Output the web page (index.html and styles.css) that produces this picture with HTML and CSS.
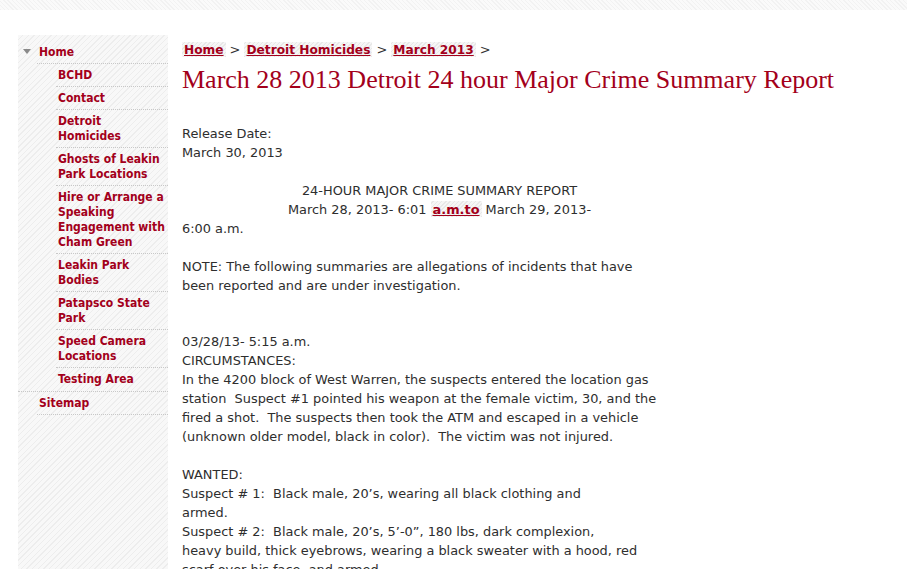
FILE: index.html
```html
<!DOCTYPE html>
<html lang="en">
<head>
<meta charset="utf-8">
<title>March 28 2013 Detroit 24 hour Major Crime Summary Report</title>
<link rel="stylesheet" href="styles.css">
</head>
<body>
<div class="topbar"></div>
<div class="page">
  <nav class="sidebar">
    <ul class="menu">
      <li class="top open">
        <div class="row home"><span class="tri"></span><a href="#">Home</a></div>
        <ul class="sub">
          <li><a href="#">BCHD</a></li>
          <li><a href="#">Contact</a></li>
          <li><a href="#">Detroit<br>Homicides</a></li>
          <li><a href="#">Ghosts of Leakin<br>Park Locations</a></li>
          <li><a href="#">Hire or Arrange a<br>Speaking<br>Engagement with<br>Cham Green</a></li>
          <li><a href="#">Leakin Park<br>Bodies</a></li>
          <li><a href="#">Patapsco State<br>Park</a></li>
          <li><a href="#">Speed Camera<br>Locations</a></li>
          <li class="last"><a href="#">Testing Area</a></li>
        </ul>
      </li>
      <li class="top">
        <div class="row"><a href="#">Sitemap</a></div>
      </li>
    </ul>
  </nav>
  <main class="content">
    <div class="crumbs"><a href="#">Home</a><span class="sep">&gt;</span><a href="#">Detroit Homicides</a><span class="sep">&gt;</span><a href="#">March 2013</a><span class="sep">&gt;</span></div>
    <h1 class="title">March 28 2013 Detroit 24 hour Major Crime Summary Report</h1>
    <div class="body">
      <p class="gap">Release Date:<br>March 30, 2013</p>
      <p class="center">24-HOUR MAJOR CRIME SUMMARY REPORT<br>March 28, 2013- 6:01 <a href="#">a.m.to</a> March 29, 2013-</p>
      <p class="gap">6:00 a.m.</p>
      <p class="gap2">NOTE: The following summaries are allegations of incidents that have<br>been reported and are under investigation.</p>
      <p class="gap">03/28/13- 5:15 a.m.<br>CIRCUMSTANCES:<br>In the 4200 block of West Warren, the suspects entered the location gas<br>station&nbsp; Suspect #1 pointed his weapon at the female victim, 30, and the<br>fired a shot.&nbsp; The suspects then took the ATM and escaped in a vehicle<br>(unknown older model, black in color).&nbsp; The victim was not injured.</p>
      <p class="gap">WANTED:<br>Suspect # 1:&nbsp; Black male, 20’s, wearing all black clothing and<br>armed.<br>Suspect # 2:&nbsp; Black male, 20’s, 5’-0”, 180 lbs, dark complexion,<br>heavy build, thick eyebrows, wearing a black sweater with a hood, red<br>scarf over his face, and armed.</p>
    </div>
  </main>
</div>
</body>
</html>
```
FILE: styles.css
```css
html, body {
  margin: 0;
  padding: 0;
  background: #fff;
}
body {
  font-family: "DejaVu Sans", Verdana, sans-serif;
  color: #2e2e2e;
}
.topbar {
  height: 10px;
  background-color: #fafafa;
  background-image: repeating-linear-gradient(45deg, #f2f2f2 0 1px, transparent 1px 3px);
}
.page {
  display: flex;
  align-items: stretch;
  padding-left: 18px;
  padding-top: 25px;
}
.sidebar {
  width: 150px;
  flex: none;
  padding-top: 6px;
  background-color: #f8f8f8;
  background-image: repeating-linear-gradient(-45deg, #ededed 0 1px, transparent 1px 4px);
}
.menu, .sub {
  list-style: none;
  margin: 0;
  padding: 0;
  font-size: 12px;
}
.menu a {
  font-family: "DejaVu Sans Condensed", "DejaVu Sans", sans-serif;
  font-stretch: condensed;
  color: #a3001b;
  text-decoration: none;
  font-weight: bold;
  font-size: 12px;
  line-height: 15px;
}
.row {
  margin-left: 19px;
  padding: 4px 0 3px 2px;
  border-bottom: 1px dotted #c8c8c8;
  line-height: 15px;
  white-space: nowrap;
}
.tri {
  display: inline-block;
  width: 0;
  height: 0;
  border-left: 4px solid transparent;
  border-right: 4px solid transparent;
  border-top: 5px solid #8a8a8a;
  margin-left: -16px;
  margin-right: 8px;
  vertical-align: 2px;
}
.top.open {
  border-bottom: 1px dotted #c8c8c8;
}
.sub li {
  margin-left: 38px;
  padding: 4px 0 3px 2px;
  border-bottom: 1px dotted #c8c8c8;
  line-height: 15px;
  white-space: nowrap;
}
.sub li.last {
  border-bottom: none;
  padding-bottom: 4px;
}
.content {
  width: 515px;
  margin-left: 14px;
  padding-top: 5px;
}
.crumbs {
  font-size: 12.2px;
  line-height: 20px;
  font-weight: bold;
}
.crumbs a, .body a {
  color: #a3001b;
  text-decoration: underline;
  padding: 1px 2px 0;
  background-color: #f6f6f6;
  background-image: repeating-linear-gradient(-45deg, #e8e8e8 0 1px, transparent 1px 3px);
}
.crumbs .sep {
  color: #333;
  font-weight: normal;
  font-size: 13px;
  margin: 0 4px;
}
.title {
  font-family: "Liberation Serif", "Times New Roman", serif;
  font-weight: normal;
  font-size: 26px;
  line-height: 32px;
  color: #a3001b;
  margin: 4px 0 0;
  white-space: nowrap;
}
.body {
  margin-top: 28px;
  font-size: 12.9px;
  line-height: 19px;
}
.body p {
  margin: 0;
  white-space: nowrap;
}
.body p.gap {
  margin-bottom: 19px;
}
.body p.gap2 {
  margin-bottom: 37px;
}
.body .center {
  text-align: center;
}
.body a {
  font-weight: bold;
}
```
